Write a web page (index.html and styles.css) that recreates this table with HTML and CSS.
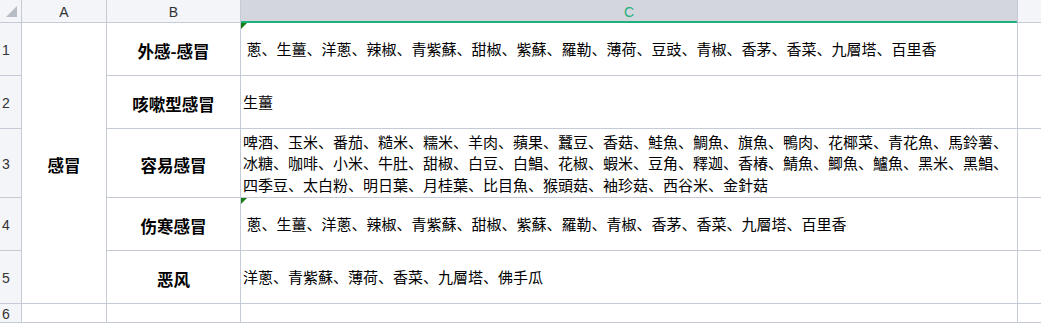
FILE: index.html
```html
<!DOCTYPE html>
<html lang="zh">
<head>
<meta charset="utf-8">
<title>Sheet</title>
<link rel="stylesheet" href="styles.css">
</head>
<body>
<div class="sheet">
  <div class="corner"><span class="corner-tri"></span></div>
  <div class="colhead">A</div>
  <div class="colhead">B</div>
  <div class="colhead sel">C</div>
  <div class="colhead blank"></div>

  <div class="rowhead">1</div>
  <div class="cell merged">感冒</div>
  <div class="cell b">外感-感冒</div>
  <div class="cell c"><span class="flag"></span> 蔥、生薑、洋蔥、辣椒、青紫蘇、甜椒、紫蘇、羅勒、薄荷、豆豉、青椒、香茅、香菜、九層塔、百里香</div>
  <div class="cell d"></div>

  <div class="rowhead">2</div>
  <div class="cell b">咳嗽型感冒</div>
  <div class="cell c">生薑</div>
  <div class="cell d"></div>

  <div class="rowhead">3</div>
  <div class="cell b">容易感冒</div>
  <div class="cell c">啤酒、玉米、番茄、糙米、糯米、羊肉、蘋果、蠶豆、香菇、鮭魚、鯛魚、旗魚、鴨肉、花椰菜、青花魚、馬鈴薯、冰糖、咖啡、小米、牛肚、甜椒、白豆、白鯧、花椒、蝦米、豆角、釋迦、香椿、鯖魚、鯽魚、鱸魚、黑米、黑鯧、四季豆、太白粉、明日葉、月桂葉、比目魚、猴頭菇、袖珍菇、西谷米、金針菇</div>
  <div class="cell d"></div>

  <div class="rowhead">4</div>
  <div class="cell b">伤寒感冒</div>
  <div class="cell c"><span class="flag"></span> 蔥、生薑、洋蔥、辣椒、青紫蘇、甜椒、紫蘇、羅勒、青椒、香茅、香菜、九層塔、百里香</div>
  <div class="cell d"></div>

  <div class="rowhead">5</div>
  <div class="cell b">恶风</div>
  <div class="cell c">洋蔥、青紫蘇、薄荷、香菜、九層塔、佛手瓜</div>
  <div class="cell d"></div>

  <div class="rowhead">6</div>
  <div class="cell a"></div>
  <div class="cell b"></div>
  <div class="cell c"></div>
  <div class="cell d"></div>
</div>
</body>
</html>
```

FILE: styles.css
```css
html, body {
  margin: 0;
  padding: 0;
  background: #ffffff;
  overflow: hidden;
}

.sheet {
  display: grid;
  grid-template-columns: 21px 84px 133px 776px 23px;
  grid-template-rows: 22px 52px 52px 68px 52px 52px 18px;
  gap: 1px;
  background: #c5cad7;
  width: 1041px;
  height: 323px;
  padding-bottom: 1px;
  box-sizing: border-box;
  font-family: "Noto Sans CJK TC", "Noto Sans CJK SC", sans-serif;
  color: #000;
}

.corner {
  grid-column: 1;
  background: #f4f5f8;
  display: flex;
  align-items: flex-start;
  justify-content: flex-start;
  padding: 6px 0 0 6px;
  box-sizing: border-box;
}

.corner-tri {
  width: 0;
  height: 0;
  border-left: 11px solid transparent;
  border-bottom: 11px solid #b8bcc4;
}

.colhead {
  background: #f4f5f8;
  font-family: "Liberation Sans", Arial, sans-serif;
  font-size: 14px;
  color: #333;
  display: flex;
  align-items: center;
  justify-content: center;
  padding-top: 1px;
  box-sizing: border-box;
}

.colhead.sel {
  background: #d3d6dd;
  color: #22b07a;
  position: relative;
}

.colhead.sel::after {
  content: "";
  position: absolute;
  left: 0;
  right: 0;
  bottom: -1px;
  height: 2px;
  background: #22b07a;
}

.rowhead {
  grid-column: 1;
  background: #f4f5f8;
  font-family: "Liberation Sans", Arial, sans-serif;
  font-size: 14px;
  color: #333;
  display: flex;
  align-items: center;
  padding-left: 2px;
  padding-top: 2px;
  box-sizing: border-box;
}

.cell {
  background: #ffffff;
  min-width: 0;
  box-sizing: border-box;
}

.merged {
  grid-column: 2;
  grid-row: 2 / span 5;
  display: flex;
  align-items: center;
  justify-content: center;
  font-family: "Noto Sans CJK SC", sans-serif;
  font-weight: bold;
  font-size: 16.5px;
  padding-top: 3px;
}

.a { grid-column: 2; }

.b {
  grid-column: 3;
  display: flex;
  align-items: center;
  justify-content: center;
  font-family: "Noto Sans CJK SC", sans-serif;
  font-weight: bold;
  font-size: 16.5px;
  line-height: 22px;
  padding-top: 3px;
}

.c {
  grid-column: 4;
  position: relative;
  display: flex;
  align-items: center;
  padding: 0 2px 0 2px;
  font-size: 15px;
  line-height: 21.6px;
  white-space: pre-wrap;
}

.d { grid-column: 5; }

.flag {
  position: absolute;
  left: 0;
  top: 0;
  width: 0;
  height: 0;
  border-top: 6px solid #167d16;
  border-right: 6px solid transparent;
}
```
